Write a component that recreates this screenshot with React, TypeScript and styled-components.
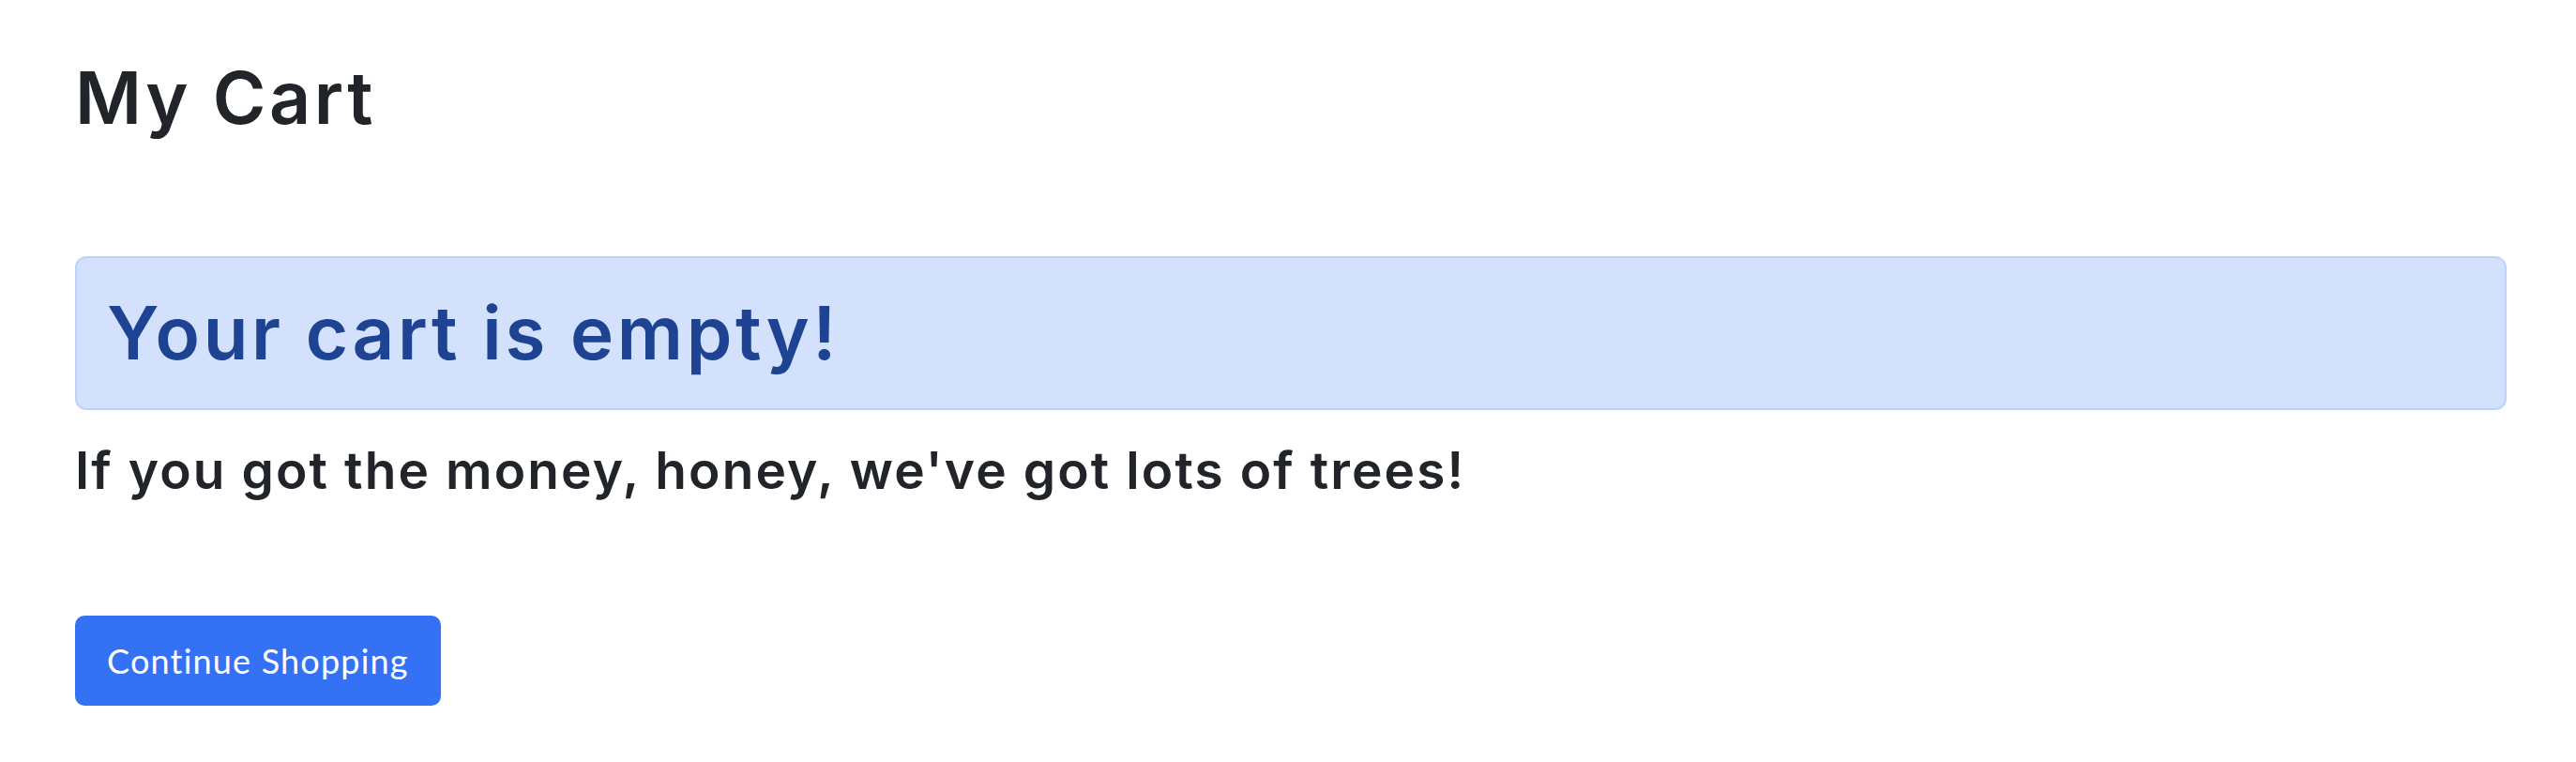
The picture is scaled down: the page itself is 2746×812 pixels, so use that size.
import React from "react";
import styled, { createGlobalStyle } from "styled-components";

const GlobalStyle = createGlobalStyle`
  html, body {
    margin: 0;
    padding: 0;
    background: #ffffff;
  }
  body {
    font-family: Inter, "Open Sans", sans-serif;
    color: #212529;
  }
`;

const Page = styled.main`
  display: flex;
  flex-direction: column;
  align-items: flex-start;
  padding: 56px 74px 40px 80px;
`;

const Title = styled.h1`
  margin: 0 0 121px;
  font-family: Inter, sans-serif;
  font-weight: 600;
  font-size: 77px;
  line-height: 96px;
  letter-spacing: 3.5px;
  color: #212529;
`;

const Alert = styled.div`
  align-self: stretch;
  box-sizing: border-box;
  margin: 0 0 31px;
  padding: 32px;
  background: #d3e1fc;
  border: 2px solid #bdd3fb;
  border-radius: 12px;
`;

const AlertHeading = styled.h1`
  margin: 0;
  font-family: Inter, sans-serif;
  font-weight: 600;
  font-size: 78px;
  line-height: 96px;
  letter-spacing: 3.6px;
  color: #1e4393;
`;

const Tagline = styled.h3`
  margin: 0 0 121px;
  font-family: Inter, sans-serif;
  font-weight: 600;
  font-size: 55px;
  line-height: 67px;
  letter-spacing: 2.1px;
  color: #212529;
`;

const Button = styled.button`
  box-sizing: border-box;
  height: 96px;
  padding: 0 32px;
  border: 2px solid #3571f4;
  border-radius: 10px;
  background: #3571f4;
  color: #ffffff;
  font-family: Lato, sans-serif;
  font-weight: 400;
  font-size: 36px;
  line-height: 60px;
  letter-spacing: 1.2px;
  cursor: pointer;
`;

export default function App() {
  return (
    <>
      <GlobalStyle />
      <Page>
        <Title>My Cart</Title>
        <Alert>
          <AlertHeading>Your cart is empty!</AlertHeading>
        </Alert>
        <Tagline>If you got the money, honey, we've got lots of trees!</Tagline>
        <Button type="button">Continue Shopping</Button>
      </Page>
    </>
  );
}
